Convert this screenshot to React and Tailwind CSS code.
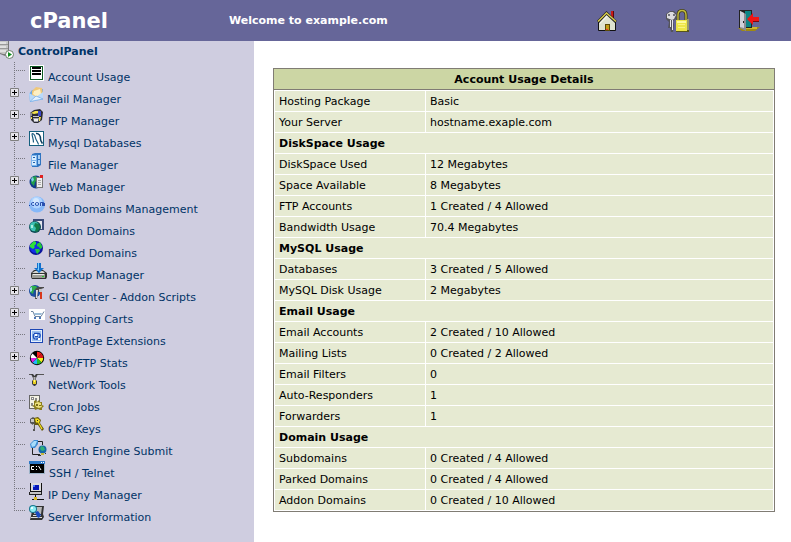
import React from "react";

/* ---------- tree icons, drawn on a small pixel grid ---------- */

const icons = {
  list: (
    <>
      <path d="M0 0h15v16H0z" fill="#fff" />
      <path d="M1 1h13v14H1z" fill="#0b5a22" />
      <path d="M2 2h11v12H2z" fill="#fff" />
      <path d="M3 2h9v2H3zM3 5h9v2H3zM3 8h9v2H3z" fill="#000" />
    </>
  ),
  mail: (
    <>
      <path d="M0 7l3-4 11-1v10L1 15z" fill="#6fa8e4" />
      <path d="M3 4l4-4 6 1 1 6-6 4-5-3z" fill="#f0c878" />
      <path d="M5 4l6-2 1 5-4 3-4-3z" fill="#fdf0c4" />
      <path d="M0 6l7 4 7-5v7L1 15z" fill="#b9dafa" />
      <path d="M1 14.500l6-5.500 7 3z" fill="#e4f2ff" stroke="#6fa8e4" strokeWidth=".7" />
    </>
  ),
  ftp: (
    <>
      <path d="M1 4l4-3 6-1 3 3-1 8-4 3H5l-3-3z" fill="#2a2a30" />
      <path d="M2 4l4-2h5l-1 2-5 1z" fill="#f2e24a" />
      <path d="M1 4h2v3H1z" fill="#8c8c98" />
      <path d="M9 2h3v5H9z" fill="#3c48c8" />
      <path d="M4 7h6v1H4z" fill="#c6c6d2" />
      <path d="M4 9h6l-1 4H5z" fill="#a4a4b0" />
      <path d="M5 10h4v2H5z" fill="#eee" />
      <path d="M2 8h1v2H2zM10 8l2 0-1 4h-1z" fill="#f2e24a" />
    </>
  ),
  mysql: (
    <>
      <path d="M0 0h15v15H0z" fill="#15607e" />
      <path d="M1 1h13v13H1z" fill="#fff" />
      <path d="M3 2.500c2 0 3 2 3.500 4.500S9 11 9.500 13.500M3 2.500c0 3 1.500 5 1.500 9" fill="none" stroke="#1a5c80" strokeWidth="1.200" />
      <path d="M7 2.500c3-.5 4.500 2.500 4.500 5.500 0 2 1 3 2 4.500" fill="none" stroke="#0d3f60" strokeWidth="1.500" />
    </>
  ),
  cabinet: (
    <>
      <path d="M3 1l3-1h6v12l-3 2H3z" fill="#2f74c0" />
      <path d="M2 2h6v11H2z" fill="#7db4ec" />
      <path d="M3 3h4v4H3zM3 8h4v4H3z" fill="#d8edff" />
      <path d="M4 4h2v1H4zM4 9h2v1H4z" fill="#2261a8" />
      <path d="M9 2h2v4H9zM9 7h2v4H9z" fill="#a8d0f6" />
    </>
  ),
  web: (
    <>
      <circle cx="7" cy="7" r="6.500" fill="#103a8c" />
      <path d="M3 2l4-1 2 3-3 3-1 4-3-3z" fill="#22a04a" />
      <path d="M2 4l2-2 1 3-2 2z" fill="#7cd0e8" />
      <path d="M7 2h7v11H7z" fill="#777" />
      <path d="M8 3h5v9H8z" fill="#eee" />
      <path d="M9 5h3v1H9zM9 7h3v1H9zM9 9h3v1H9z" fill="#aaa" />
      <path d="M11 0h3v3h-3z" fill="#e02020" />
    </>
  ),
  dotcom: (
    <>
      <circle cx="8" cy="7.500" r="8" fill="#86b8f8" />
      <circle cx="7.500" cy="5.500" r="6" fill="#b0d4ff" />
      <circle cx="7" cy="4" r="3" fill="#d4e8ff" />
      <path d="M0 8h1v1H0z" fill="#173f9c" />
      <path d="M5 5.500H3.500q-1 0-1 1.500t1 1.500H5M7.500 5.500h1q1 0 1 1.500t-1 1.500h-1q-1 0-1-1.500t1-1.500zM11.500 9V5.500h3V9M13.500 6v3M15.500 9V6" fill="none" stroke="#2a4fae" />
    </>
  ),
  addon: (
    <>
      <path d="M4 0h11v11H4z" fill="#3b4c7a" />
      <path d="M5 2h8v8H5z" fill="#e4e6ee" />
      <circle cx="6" cy="8" r="6" fill="#0d4b55" />
      <circle cx="5.500" cy="7.500" r="4.800" fill="#3cc0b4" />
      <path d="M6 4l4 1 1 4-3 4-2-1 1-3-2-2z" fill="#127a48" />
      <path d="M2 6h2v3H2z" fill="#a8efe0" />
    </>
  ),
  globe: (
    <>
      <circle cx="7" cy="7" r="7" fill="#0a149c" />
      <circle cx="6.500" cy="6.500" r="5.500" fill="#1230e8" />
      <path d="M1 4l4-4 2 1 0 2-2 2 1 1-2 2-3-2z" fill="#2fe23a" />
      <path d="M8 3l3-2 2 4 0 2-2 1-1-2-2-1zM6 8l4 0 1 2-3 3-1-2z" fill="#22c83c" />
    </>
  ),
  backup: (
    <>
      <path d="M2 10l3-3h9l4 3v4l-1 2H3l-1-2z" fill="#333" />
      <path d="M3 10l3-2h8l2 2z" fill="#d4d4cf" />
      <path d="M3 11h13v4H3z" fill="#9c9c96" />
      <path d="M4 11h11v1H4z" fill="#ecece8" />
      <path d="M13 13h2v1h-2z" fill="#2c2" />
      <path d="M8 0h4v5h3l-5 5-5-5h3z" fill="#1470cc" />
      <path d="M9 0h1v8l-2-2h1z" fill="#7cd0ff" />
    </>
  ),
  cgi: (
    <>
      <circle cx="6" cy="6" r="6" fill="#1b4ea0" />
      <path d="M2 1l5 0 2 3-4 1-1 4-3-2z" fill="#2fae4c" />
      <path d="M1 3l2-1 0 4-2 1z" fill="#9ee0f0" />
      <path d="M6 4l3-2h6v1l-3 1v2l-3 1-1 7H6l1-7z" fill="#4a4a4a" />
      <path d="M7 5l2 0-1 8H7z" fill="#ddd" />
      <path d="M11 7h2v7h-2z" fill="#d8381c" />
      <path d="M10 4h3v3h-3z" fill="#c4c4c4" />
    </>
  ),
  cart: (
    <>
      <path d="M0 2h16v11H0z" fill="#fff" />
      <path d="M2 4.500h2l2 5h6l3-5" fill="none" stroke="#6c84a0" />
      <path d="M5 6h8l-1 2H6z" fill="#9abcd8" />
      <path d="M5 10h2v2H5zM10 10h2v2h-2z" fill="#4f78b8" />
    </>
  ),
  frontpage: (
    <>
      <path d="M1 0h13v14H1z" fill="#1c46b4" />
      <path d="M2 1h11v12H2z" fill="#e6f0fc" />
      <path d="M3 2h9v10H3z" fill="#9cc0f0" />
      <path d="M5 4.500h4q3 0 2 3t-4 2.500M4.500 5q-1 5 2 5M6 7.500h3" fill="none" stroke="#1d4cb8" strokeWidth="1.300" />
      <path d="M6 5h2v2H6zM9 9h2v2H9z" fill="#fff" />
    </>
  ),
  stats: (
    <>
      <circle cx="8" cy="7" r="7.200" fill="#000" />
      <path d="M8 7V.8a6 6 0 0 1 4.500 1.700z" fill="#f22" />
      <path d="M8 7l4.500-4.500A6 6 0 0 1 14.200 7z" fill="#d81818" />
      <path d="M8 7h6.200a6 6 0 0 1-1.700 4.500z" fill="#f6f020" />
      <path d="M8 7l4.500 4.500A6 6 0 0 1 8 13.200z" fill="#20c030" />
      <path d="M8 7v6.200a6 6 0 0 1-4.500-1.700z" fill="#20b8f8" />
      <path d="M8 7l-4.500 4.500A6 6 0 0 1 1.800 7z" fill="#e020e0" />
      <path d="M8 7H1.800a6 6 0 0 1 1.700-4.500z" fill="#fff" />
    </>
  ),
  network: (
    <>
      <path d="M0 1.500h4M8 1.500h7" stroke="#555" />
      <path d="M2 1l2 0 1.500 2L7 1l2 0-2 4v2l1 1v3l-2 2-1 0-2-2V8l1-1V5z" fill="#3c3c3c" />
      <path d="M4.500 4h2v3h-2z" fill="#b4b4b4" />
      <path d="M4 7h3v4H4z" fill="#e8d020" />
      <path d="M5 7h1v2H5z" fill="#fff48a" />
    </>
  ),
  cron: (
    <>
      <path d="M0 0h11v14H0z" fill="#666" />
      <path d="M1 1h9v12H1z" fill="#f4f2e4" />
      <path d="M2 2h3v3H2zM6 3h2v3H6zM2 8h2v3H2z" fill="#888" />
      <path d="M3 3h1v1H3z" fill="#fff" />
      <path d="M5 6l2-1 1 2 2-2 1 2 2 0-0 3 2 1-2 2v2h-2l-2-1-3 1-1-3-2-1 2-1z" fill="#8a7c1c" />
      <path d="M6 8l3-1 3 1 0 2 1 2-3 1-3-1-1-2z" fill="#ece07c" />
      <path d="M7 9h2v2H7zM10 10h2v1h-2z" fill="#7b6d18" />
    </>
  ),
  keys: (
    <>
      <path d="M1 2l3-2 3 2v4L6 8v6H4V8L1 6z" fill="#555" />
      <path d="M2 2h3v3H2zM4 7h1v5H4z" fill="#c4c4c4" />
      <path d="M5 1l4-1 3 3-1 3 4 6-2 2-4-6H6z" fill="#66590c" />
      <path d="M6 1.500h3l2 2-1 2 3.500 6-1 1-3.500-7H7z" fill="#f4e020" />
      <path d="M8 3h1v1H8z" fill="#333" />
    </>
  ),
  search: (
    <>
      <path d="M9 2.500h4.500V6M3.500 9v6.500H11" fill="none" stroke="#222" />
      <path d="M1 5l4-4 4 0v4L6 9 2 9z" fill="#3f8cd4" />
      <path d="M2 5l3-3 3 0-2 5-3 1z" fill="#a8dcfa" />
      <circle cx="13.500" cy="10.500" r="4" fill="#1668a8" />
      <path d="M12 7l3 1 1 3-3 1-2-2z" fill="#2fb078" />
      <path d="M12 14h3v2h-3z" fill="#c8b83c" />
      <path d="M16 14h1v1h-1zM9 16h3v1H9z" fill="#333" />
    </>
  ),
  terminal: (
    <>
      <path d="M0 0h16v13H0z" fill="#9db4c8" />
      <path d="M0 0h16v3H0z" fill="#2c78c8" />
      <path d="M12 1h1v1h-1zM14 1h1v1h-1z" fill="#fff" />
      <path d="M1 3h14v9H1z" fill="#000" />
      <path d="M5 5.500H2.500v3H5M7.500 5v1M7.500 8v1M9.500 5l2.500 4" fill="none" stroke="#fff" />
    </>
  ),
  computer: (
    <>
      <path d="M1 0h12v9H1z" fill="#111" />
      <path d="M2 0h10v8H2z" fill="#dcdcdc" />
      <path d="M4 2h6v5H4z" fill="#0818b8" />
      <path d="M4 2h2v2H4z" fill="#4c7cf8" />
      <path d="M0 9h13v3H0z" fill="#222" />
      <path d="M1 9h11v2H1z" fill="#c4c4c4" />
      <path d="M6.500 12v4M3 16.500h12" stroke="#111" />
      <path d="M5 14h3v3H5z" fill="#d8b820" />
    </>
  ),
  server: (
    <>
      <path d="M4 1h11l-1 8 1 3-2 3H1l1-4z" fill="#333" />
      <path d="M6 2h7l-1 7H5z" fill="#b8b8b8" />
      <path d="M2 12h11v1H2zM4 10h8v1H4z" fill="#ddd" />
      <path d="M6 7l3-1 3 4-2 3-2-1z" fill="#1848c0" />
      <circle cx="4" cy="4" r="4" fill="#187890" />
      <circle cx="4" cy="4" r="3" fill="#8cecf4" />
      <path d="M2 2h2v2H2z" fill="#e4ffff" />
    </>
  ),
};

const items = [
  { label: "Account Usage", icon: "list", width: "w-4" },
  { label: "Mail Manager", icon: "mail", width: "w-[15px]", open: true },
  { label: "FTP Manager", icon: "ftp", width: "w-4", open: true },
  { label: "Mysql Databases", icon: "mysql", width: "w-4", open: true },
  { label: "File Manager", icon: "cabinet", width: "w-4" },
  { label: "Web Manager", icon: "web", width: "w-[17px]", open: true },
  { label: "Sub Domains Management", icon: "dotcom", width: "w-[17px]" },
  { label: "Addon Domains", icon: "addon", width: "w-4" },
  { label: "Parked Domains", icon: "globe", width: "w-4" },
  { label: "Backup Manager", icon: "backup", width: "w-5" },
  { label: "CGI Center - Addon Scripts", icon: "cgi", width: "w-[17px]", open: true },
  { label: "Shopping Carts", icon: "cart", width: "w-[17px]", open: true },
  { label: "FrontPage Extensions", icon: "frontpage", width: "w-4" },
  { label: "Web/FTP Stats", icon: "stats", width: "w-[17px]", open: true },
  { label: "NetWork Tools", icon: "network", width: "w-4" },
  { label: "Cron Jobs", icon: "cron", width: "w-4" },
  { label: "GPG Keys", icon: "keys", width: "w-4" },
  { label: "Search Engine Submit", icon: "search", width: "w-[19px]" },
  { label: "SSH / Telnet", icon: "terminal", width: "w-[17px]" },
  { label: "IP Deny Manager", icon: "computer", width: "w-4" },
  { label: "Server Information", icon: "server", width: "w-4" },
];

const sections = [
  {
    rows: [
      ["Hosting Package", "Basic"],
      ["Your Server", "hostname.exaple.com"],
    ],
  },
  {
    title: "DiskSpace Usage",
    rows: [
      ["DiskSpace Used", "12 Megabytes"],
      ["Space Available", "8 Megabytes"],
      ["FTP Accounts", "1 Created / 4 Allowed"],
      ["Bandwidth Usage", "70.4 Megabytes"],
    ],
  },
  {
    title: "MySQL Usage",
    rows: [
      ["Databases", "3 Created / 5 Allowed"],
      ["MySQL Disk Usage", "2 Megabytes"],
    ],
  },
  {
    title: "Email Usage",
    rows: [
      ["Email Accounts", "2 Created / 10 Allowed"],
      ["Mailing Lists", "0 Created / 2 Allowed"],
      ["Email Filters", "0"],
      ["Auto-Responders", "1"],
      ["Forwarders", "1"],
    ],
  },
  {
    title: "Domain Usage",
    rows: [
      ["Subdomains", "0 Created / 4 Allowed"],
      ["Parked Domains", "0 Created / 4 Allowed"],
      ["Addon Domains", "0 Created / 10 Allowed"],
    ],
  },
];

function Branch({ last, expandable }) {
  return (
    <svg width="29" height="22" viewBox="0 0 29 22" className="block" aria-hidden="true">
      <path d={last ? "M14.500 0V9" : "M14.500 0V22"} stroke="#77777f" strokeDasharray="1 1" />
      <path d="M14 8.500H26" stroke="#77777f" strokeDasharray="1 1" />
      {expandable && (
        <>
          <path d="M10.500 4.500h8v8h-8z" fill="#e6e4ea" stroke="#808080" />
          <path d="M12 8.500h5M14.500 6v5" stroke="#000" />
        </>
      )}
    </svg>
  );
}

function TreeRow({ item, last }) {
  return (
    <li className="flex h-[22px] items-start">
      {item.open ? (
        <button type="button" aria-label={"Expand " + item.label} className="shrink-0">
          <Branch expandable />
        </button>
      ) : (
        <span className="shrink-0">
          <Branch last={last} />
        </span>
      )}
      <a href="#" className="flex items-start gap-[3px] pt-[3px] whitespace-nowrap text-[#003366]">
        <span className={"shrink-0 " + item.width}>
          <svg width="18" height="16" viewBox="0 0 18 16" className="block max-w-none overflow-visible" aria-hidden="true">
            {icons[item.icon]}
          </svg>
        </span>
        <span className="pt-[5px] leading-4">{item.label}</span>
      </a>
    </li>
  );
}

function HomeIcon() {
  return (
    <svg width="20" height="22" viewBox="0 0 20 22" aria-hidden="true">
      <path d="M14 1h3v8h-3z" fill="#c81818" />
      <path d="M16 1h1v8h-1z" fill="#5a0808" />
      <path d="M2 12l7-8 9 8v9H2z" fill="#dfe2d0" />
      <path d="M2 12l7-8 2 2-8 8z" fill="#f6f6ea" />
      <path d="M1.500 12v8.500h17V12" fill="none" stroke="#111" />
      <path d="M1 12l8.500-9L19 12" fill="none" stroke="#222" strokeWidth="3" />
      <path d="M1 11.500L9.500 3 19 11.500" fill="none" stroke="#d8cc4c" strokeWidth="1.500" />
      <path d="M8 14h5v7H8z" fill="#5c4a08" />
      <path d="M9 15h3v5H9z" fill="#c49c18" />
      <path d="M9 19h2v1H9z" fill="#e33" />
    </svg>
  );
}

function LockIcon() {
  return (
    <svg width="24" height="24" viewBox="0 0 24 24" aria-hidden="true">
      <path d="M13 12V6q0-4.500 4-4.500T21 6v6" fill="none" stroke="#3c3a14" strokeWidth="3" />
      <path d="M13 12V6q0-4.500 4-4.500T21 6v6" fill="none" stroke="#c4bc3c" strokeWidth="1.400" />
      <path d="M11 11h13v12H11z" fill="#57541c" />
      <path d="M11 11h11v11H11z" fill="#ece548" />
      <path d="M12 12h9v2h-9z" fill="#fbf9a0" />
      <path d="M13 15h7v1h-7zM13 18h7v1h-7z" fill="#f8f480" />
      <path d="M22 10h2v11h-2z" fill="#98986c" />
      <path d="M1 5l4-3h4l3 3-1 5-3 2 1 4-1 7H6l-1-4H3l1-6-3-3z" fill="#54545c" />
      <path d="M2 5l3-2h3l3 3-2 4-2 1-5-2z" fill="#dcdce0" />
      <path d="M3 5h2v2H3zM8 5h2v2H8z" fill="#72727c" />
      <path d="M5 11h1v7H5zM7 11h1v10H7z" fill="#e8e8ea" />
    </svg>
  );
}

function ExitIcon() {
  return (
    <svg width="24" height="22" viewBox="0 0 24 22" aria-hidden="true">
      <path d="M1 18l6-1h16l-5 4H5z" fill="#a08a10" />
      <path d="M8 17h12v2H8z" fill="#d0b828" />
      <path d="M2 0h13v18H2z" fill="#222" />
      <path d="M8 1h6v16H8z" fill="#0c8484" />
      <path d="M3 1l6 3v17l-6-3z" fill="#8c8c94" />
      <path d="M3 1l4 2v15l-4-1z" fill="#d0d0d8" />
      <path d="M6 11h1v2H6z" fill="#222" />
      <path d="M10 9l6-6v4h6v4h-6v4z" fill="#f01414" />
      <path d="M16 11h6v1h-6z" fill="#7c0808" />
    </svg>
  );
}

function RootIcon() {
  return (
    <svg width="14" height="19" viewBox="0 0 14 19" className="block" aria-hidden="true">
      <path d="M0 0h9v11l3 4H5l-5-2z" fill="#777" />
      <path d="M0 0h8v13H3l-3-1z" fill="#c6c6c6" />
      <path d="M0 1h6v2H0zM0 5h6v2H0zM0 9h6v2H0z" fill="#e0e0e0" />
      <path d="M0 3.500h8M0 7.500h8" stroke="#999" />
      <circle cx="9.500" cy="13.500" r="4" fill="#fff" stroke="#6c7c6c" />
      <path d="M8 11l4 2.500L8 16z" fill="#118c22" />
    </svg>
  );
}

export default function App() {
  return (
    <div className="flex min-h-screen flex-col bg-white font-['Verdana','DejaVu_Sans',sans-serif] text-[11px] text-black">
      <header className="flex h-[41px] items-center bg-[#666699] text-white">
        <div className="flex flex-1 items-center">
          <h1 className="w-[229px] pl-[30px] text-[21px] leading-6 font-bold">cPanel</h1>
          <p className="pt-0.5 font-bold whitespace-nowrap">Welcome to example.com</p>
        </div>
        <nav className="flex items-center gap-12 pr-[30px]">
          <a href="#" aria-label="Home"><HomeIcon /></a>
          <a href="#" aria-label="Change password"><LockIcon /></a>
          <a href="#" aria-label="Log out"><ExitIcon /></a>
        </nav>
      </header>

      <div className="flex flex-1">
        <nav className="w-[254px] shrink-0 bg-[#cfcde0]" aria-label="Control panel">
          <a href="#" className="flex h-[21px] items-start gap-1 font-bold text-[#003366]">
            <RootIcon />
            <span className="pt-[3px] leading-4">ControlPanel</span>
          </a>
          <ul>
            {items.map((item, i) => (
              <TreeRow key={item.label} item={item} last={i === items.length - 1} />
            ))}
          </ul>
        </nav>

        <main className="flex-1 pt-[27px] pr-4 pl-[19px]">
          <div className="border border-[#807c74]">
            <table className="w-full table-fixed border-separate border-spacing-px bg-white">
              <caption className="h-[21px] border-b border-[#807c74] bg-[#ccd6a4] pt-0.5 leading-[18px] font-bold">
                Account Usage Details
              </caption>
              <colgroup>
                <col className="w-[150px]" />
                <col />
              </colgroup>
              {sections.map((section, i) => (
                <tbody key={i}>
                  {section.title && (
                    <tr>
                      <th colSpan={2} scope="colgroup" className="h-5 bg-[#e6ead2] px-1 pt-0.5 pb-0 text-left leading-[18px] font-bold">
                        {section.title}
                      </th>
                    </tr>
                  )}
                  {section.rows.map(([name, value]) => (
                    <tr key={name}>
                      <th scope="row" className="h-5 bg-[#e6ead2] px-1 pt-0.5 pb-0 text-left leading-[18px] font-normal">{name}</th>
                      <td className="h-5 bg-[#e6ead2] px-1 pt-0.5 pb-0 leading-[18px]">{value}</td>
                    </tr>
                  ))}
                </tbody>
              ))}
            </table>
          </div>
        </main>
      </div>
    </div>
  );
}
